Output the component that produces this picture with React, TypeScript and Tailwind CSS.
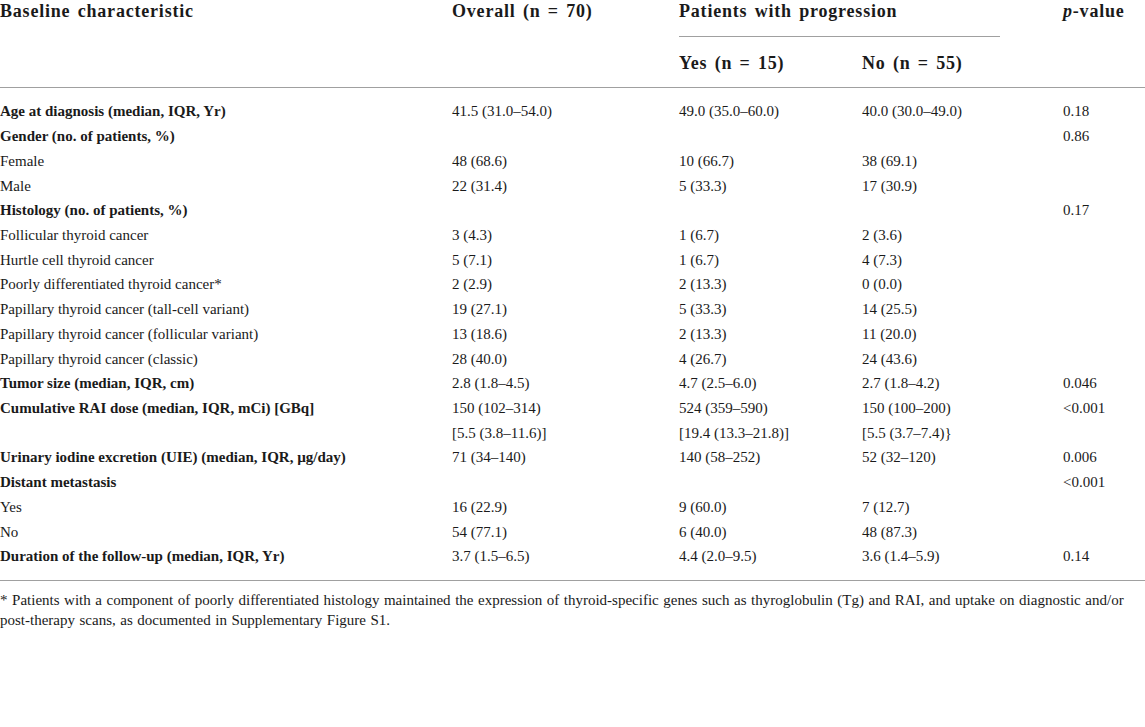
const rows: { label: string; bold?: boolean; cells: string[] }[] = [
  { label: 'Age at diagnosis (median, IQR, Yr)', bold: true, cells: ['41.5 (31.0–54.0)', '49.0 (35.0–60.0)', '40.0 (30.0–49.0)', '0.18'] },
  { label: 'Gender (no. of patients, %)', bold: true, cells: ['', '', '', '0.86'] },
  { label: 'Female', cells: ['48 (68.6)', '10 (66.7)', '38 (69.1)', ''] },
  { label: 'Male', cells: ['22 (31.4)', '5 (33.3)', '17 (30.9)', ''] },
  { label: 'Histology (no. of patients, %)', bold: true, cells: ['', '', '', '0.17'] },
  { label: 'Follicular thyroid cancer', cells: ['3 (4.3)', '1 (6.7)', '2 (3.6)', ''] },
  { label: 'Hurtle cell thyroid cancer', cells: ['5 (7.1)', '1 (6.7)', '4 (7.3)', ''] },
  { label: 'Poorly differentiated thyroid cancer*', cells: ['2 (2.9)', '2 (13.3)', '0 (0.0)', ''] },
  { label: 'Papillary thyroid cancer (tall-cell variant)', cells: ['19 (27.1)', '5 (33.3)', '14 (25.5)', ''] },
  { label: 'Papillary thyroid cancer (follicular variant)', cells: ['13 (18.6)', '2 (13.3)', '11 (20.0)', ''] },
  { label: 'Papillary thyroid cancer (classic)', cells: ['28 (40.0)', '4 (26.7)', '24 (43.6)', ''] },
  { label: 'Tumor size (median, IQR, cm)', bold: true, cells: ['2.8 (1.8–4.5)', '4.7 (2.5–6.0)', '2.7 (1.8–4.2)', '0.046'] },
  { label: 'Cumulative RAI dose (median, IQR, mCi) [GBq]', bold: true, cells: ['150 (102–314)', '524 (359–590)', '150 (100–200)', '<0.001'] },
  { label: '', cells: ['[5.5 (3.8–11.6)]', '[19.4 (13.3–21.8)]', '[5.5 (3.7–7.4)}', ''] },
  { label: 'Urinary iodine excretion (UIE) (median, IQR, µg/day)', bold: true, cells: ['71 (34–140)', '140 (58–252)', '52 (32–120)', '0.006'] },
  { label: 'Distant metastasis', bold: true, cells: ['', '', '', '<0.001'] },
  { label: 'Yes', cells: ['16 (22.9)', '9 (60.0)', '7 (12.7)', ''] },
  { label: 'No', cells: ['54 (77.1)', '6 (40.0)', '48 (87.3)', ''] },
  { label: 'Duration of the follow-up (median, IQR, Yr)', bold: true, cells: ['3.7 (1.5–6.5)', '4.4 (2.0–9.5)', '3.6 (1.4–5.9)', '0.14'] },
]

const grid = 'grid grid-cols-[452px_227px_183px_201px_1fr]'
const head = 'text-[18px] font-bold leading-[22px] tracking-[0.8px] [word-spacing:2px]'

export default function App() {
  return (
    <div className="w-[1145px] h-[727px] bg-white text-[#1a1a1a] font-['Liberation_Serif',serif] overflow-hidden">
      {/* header */}
      <div className={grid + ' ' + head}>
        <div>Baseline characteristic</div>
        <div>Overall (n = 70)</div>
        <div className="col-span-2">
          <div>Patients with progression</div>
          <div className="w-[321px] h-[15px] border-b border-[#a0a0a0]" />
        </div>
        <div><span className="italic">p</span>-value</div>
      </div>
      <div className={grid + ' ' + head + ' pt-[15px] h-[51px] border-b border-[#a0a0a0]'}>
        <div />
        <div />
        <div>Yes (n = 15)</div>
        <div>No (n = 55)</div>
        <div />
      </div>

      {/* body */}
      <div className="py-[11px] text-[15px] border-b border-[#a0a0a0]">
        {rows.map((r, i) => (
          <div key={i} className={grid + ' h-[24.72px] items-center leading-[20px]'}>
            <div className={r.bold ? 'font-bold' : ''}>{r.label}</div>
            {r.cells.map((c, j) => <div key={j}>{c}</div>)}
          </div>
        ))}
      </div>

      {/* footnote */}
      <div className="pt-[9px] text-[15px] leading-[20px] [word-spacing:0.8px]">
        * Patients with a component of poorly differentiated histology maintained the expression of thyroid-specific genes such as thyroglobulin (Tg) and RAI, and uptake on diagnostic and/or post-therapy scans, as documented in Supplementary Figure S1.
      </div>
    </div>
  )
}
